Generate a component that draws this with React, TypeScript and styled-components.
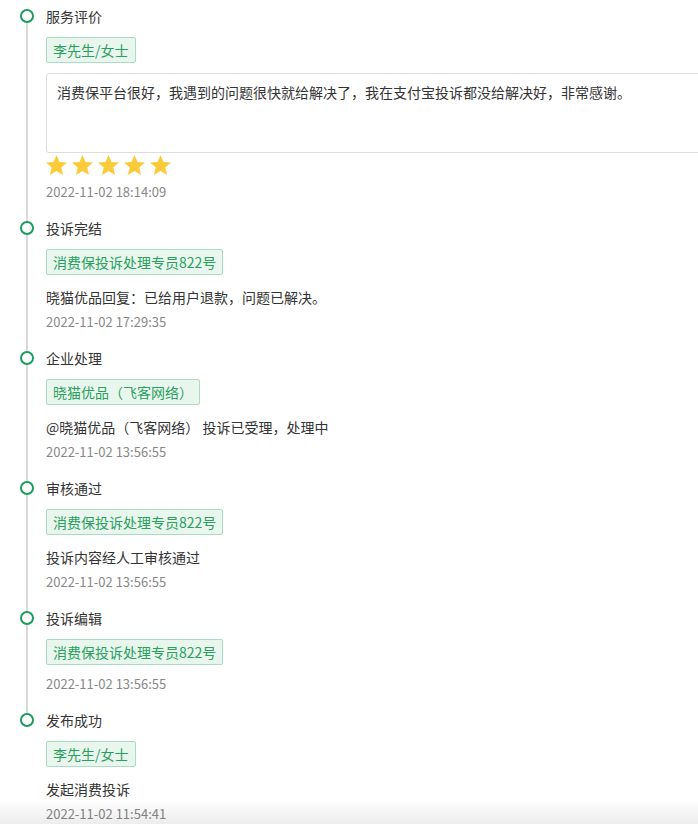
import React from 'react'
import styled, { createGlobalStyle } from 'styled-components'

const GlobalStyle = createGlobalStyle`
  html, body {
    margin: 0;
    padding: 0;
    overflow: hidden;
    background: #fff;
  }
  body {
    font-family: "Microsoft YaHei", "Noto Sans CJK SC", "Noto Sans", sans-serif;
    color: #333;
  }
`

type Record = {
  title: string
  tag: string
  text?: string
  comment?: string
  stars?: number
  time: string
}

const records: Record[] = [
  {
    title: '服务评价',
    tag: '李先生/女士',
    comment: '消费保平台很好，我遇到的问题很快就给解决了，我在支付宝投诉都没给解决好，非常感谢。',
    stars: 5,
    time: '2022-11-02 18:14:09',
  },
  {
    title: '投诉完结',
    tag: '消费保投诉处理专员822号',
    text: '晓猫优品回复：已给用户退款，问题已解决。',
    time: '2022-11-02 17:29:35',
  },
  {
    title: '企业处理',
    tag: '晓猫优品（飞客网络）',
    text: '@晓猫优品（飞客网络） 投诉已受理，处理中',
    time: '2022-11-02 13:56:55',
  },
  {
    title: '审核通过',
    tag: '消费保投诉处理专员822号',
    text: '投诉内容经人工审核通过',
    time: '2022-11-02 13:56:55',
  },
  {
    title: '投诉编辑',
    tag: '消费保投诉处理专员822号',
    time: '2022-11-02 13:56:55',
  },
  {
    title: '发布成功',
    tag: '李先生/女士',
    text: '发起消费投诉',
    time: '2022-11-02 11:54:41',
  },
]

const Page = styled.div`
  width: 100%;
  height: 824px;
  overflow: hidden;
  position: relative;

  &::after {
    content: "";
    position: fixed;
    left: 0;
    right: 0;
    bottom: 0;
    height: 26px;
    background: linear-gradient(rgba(0, 0, 0, 0), rgba(0, 0, 0, 0.07));
    pointer-events: none;
  }
`

const Timeline = styled.ul`
  list-style: none;
  margin: 0;
  padding: 6px 0 0 0;
`

const Item = styled.li`
  position: relative;
  padding: 0 0 17px 46px;

  &::before {
    content: "";
    position: absolute;
    left: 26px;
    top: 10px;
    bottom: -10px;
    width: 2px;
    background: #d9d9d9;
  }

  &:last-child::before {
    display: none;
  }
`

const Dot = styled.span`
  position: absolute;
  left: 20px;
  top: 3px;
  width: 14px;
  height: 14px;
  box-sizing: border-box;
  border: 2.5px solid #1a9d5b;
  border-radius: 50%;
  background: #fff;
  z-index: 1;
`

const Title = styled.div`
  font-size: 14px;
  line-height: 20px;
  color: #333;
`

const Tag = styled.div`
  display: inline-block;
  margin-top: 11px;
  padding: 0 6px;
  height: 24px;
  line-height: 24px;
  font-size: 14px;
  color: #2a9f5e;
  background: #e8f6ee;
  border: 1px solid #a9ddc2;
  border-radius: 2px;
`

const Block = styled.div`
  display: block;
`

const Comment = styled.div`
  margin-top: 10px;
  width: 690px;
  height: 80px;
  box-sizing: border-box;
  padding: 8px 10px;
  font-size: 14px;
  line-height: 20px;
  color: #333;
  border: 1px solid #ddd;
  border-radius: 3px;
`

const Stars = styled.div`
  display: flex;
  gap: 5px;
  margin-top: 2px;
`

const Text = styled.div`
  margin-top: 12px;
  font-size: 14px;
  line-height: 20px;
  color: #333;
`

const Time = styled.div<{ $gap: number }>`
  margin-top: ${(p) => p.$gap}px;
  font-size: 13px;
  line-height: 18px;
  color: #888;
`

const Star = () => (
  <svg width={21} height={20} viewBox="1.2 1.5 21.6 20.5">
    <path
      fill="#fccb3a"
      d="M12 1.5l3.1 7.2 7.7.6-5.9 5.1 1.8 7.6L12 17.9 5.3 22l1.8-7.6L1.2 9.3l7.7-.6z"
    />
  </svg>
)

export default function App() {
  return (
    <Page>
      <GlobalStyle />
      <Timeline>
        {records.map((r, i) => (
          <Item key={i}>
            <Dot />
            <Title>{r.title}</Title>
            <Block>
              <Tag>{r.tag}</Tag>
            </Block>
            {r.comment && <Comment>{r.comment}</Comment>}
            {r.stars && (
              <Stars>
                {Array.from({ length: r.stars }).map((_, k) => (
                  <Star key={k} />
                ))}
              </Stars>
            )}
            {r.text && <Text>{r.text}</Text>}
            <Time $gap={r.stars ? 8 : r.text ? 6 : 10}>{r.time}</Time>
          </Item>
        ))}
      </Timeline>
    </Page>
  )
}
